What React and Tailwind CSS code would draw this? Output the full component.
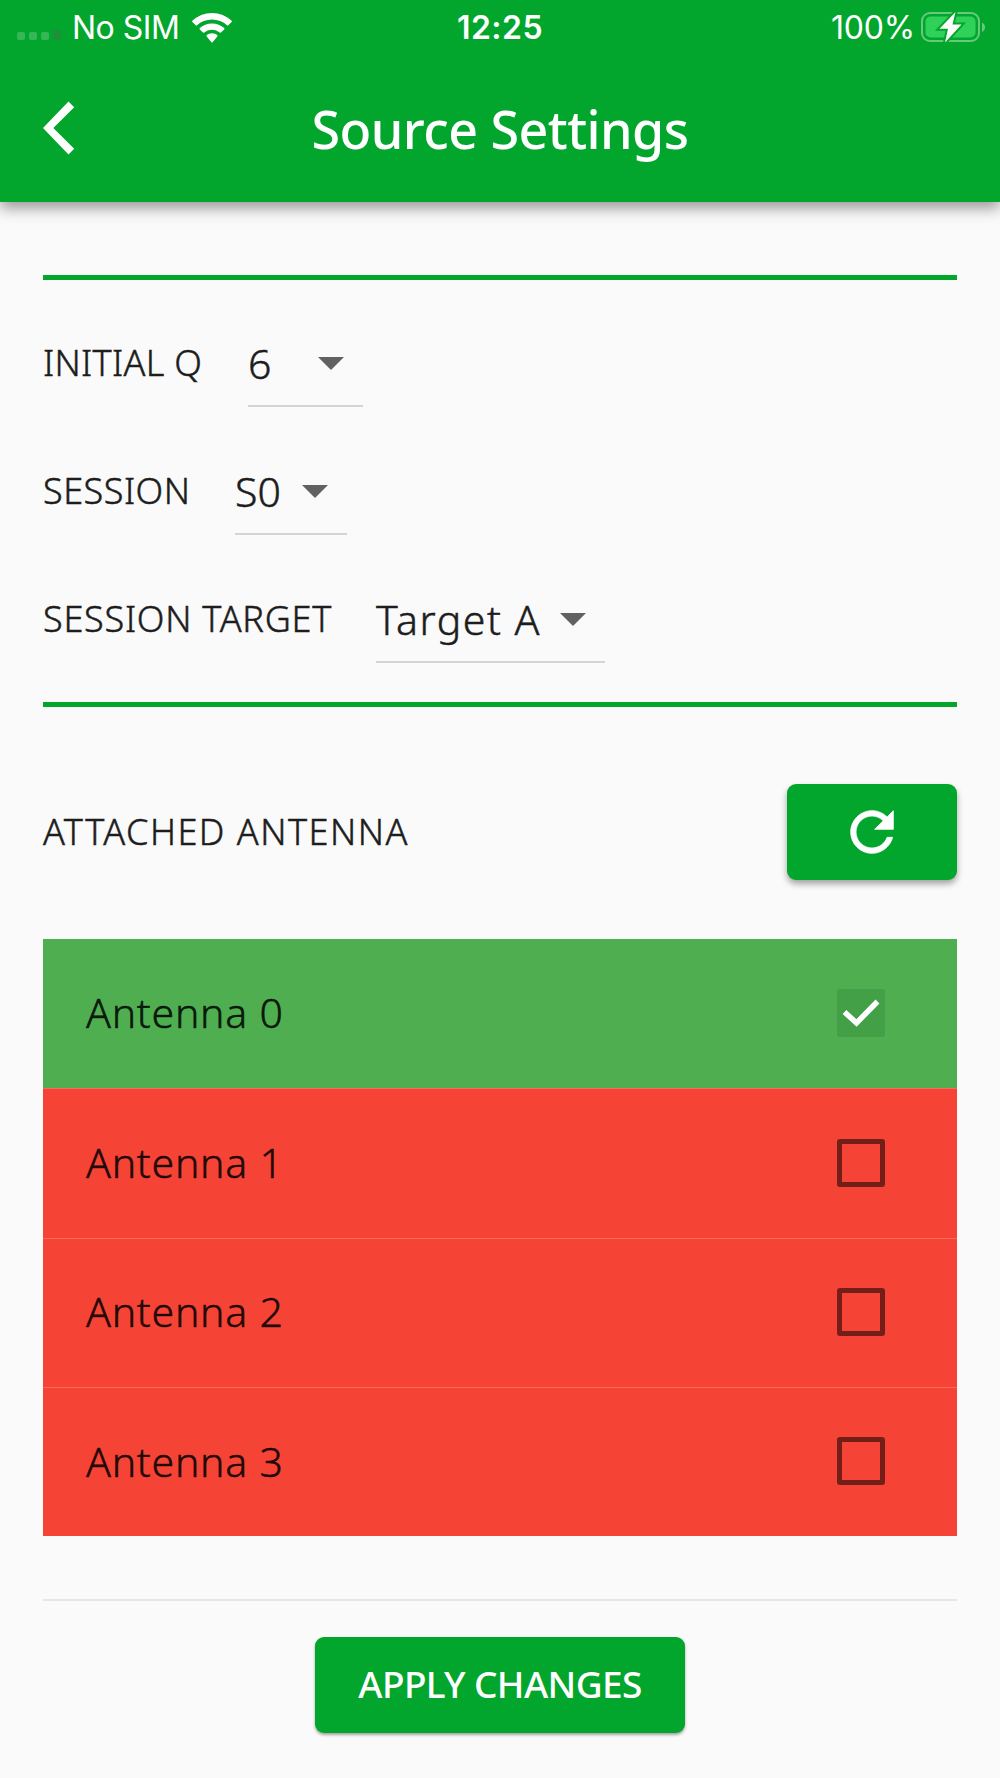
import React, { useState } from 'react'
import clsx from 'clsx'

const StatusBar = () => (
	<div className="flex h-[54px] items-center justify-between pl-[17px] pr-[15px] pt-px font-['Inter',sans-serif] text-[32px] font-normal leading-[54px] text-white">
		<div className="flex w-[330px] items-center">
			<div className="mt-[15px] flex items-end gap-1">
				<span className="h-2 w-2 rounded-[2px] bg-white/20"></span>
				<span className="h-2 w-2 rounded-[2px] bg-white/20"></span>
				<span className="h-2 w-2 rounded-[2px] bg-white/20"></span>
				<span className="h-2.5 w-2 rounded-[2px] bg-[#1f8f3b]"></span>
			</div>
			<span className="ml-[11px] w-[120px] whitespace-nowrap text-[32px] tracking-[-0.5px]">No SIM</span>
			<svg className="h-[30px] w-10" viewBox="0 0 40 30" fill="white">
				<path d="M20 0C12.5 0 5.6 2.9.4 7.700a.9.9 0 0 0 0 1.300L3.700 12.300a.9.9 0 0 0 1.300 0C8.900 8.700 14.200 6.500 20 6.500s11.100 2.200 15 5.800a.9.9 0 0 0 1.300 0l3.300-3.300a.9.9 0 0 0 0-1.300C34.400 2.900 27.500 0 20 0Z" />
				<path d="M20 10.400c-4.700 0-9 1.800-12.200 4.700a.9.9 0 0 0 0 1.300l3.300 3.200a.9.9 0 0 0 1.200 0c2.100-1.800 4.700-2.900 7.700-2.900s5.600 1.100 7.700 2.900a.9.9 0 0 0 1.200 0l3.300-3.200a.9.9 0 0 0 0-1.300C29 12.200 24.700 10.400 20 10.400Z" />
				<path d="M20 20.300c-2 0-3.900.7-5.300 1.900a.9.9 0 0 0 0 1.300l4.700 5.700a.9.9 0 0 0 1.200 0l4.700-5.700a.9.9 0 0 0 0-1.300c-1.400-1.200-3.300-1.900-5.300-1.900Z" />
			</svg>
		</div>
		<span className="mr-[2px] text-[32px] font-semibold tracking-[0.5px]">12:25</span>
		<div className="flex w-[330px] items-center justify-end">
			<span className="mr-[6px] text-[32px] tracking-[-0.2px]">100%</span>
			<svg className="-mt-[2px] h-8 w-16" viewBox="0 0 64 32">
				<rect x="1" y="2" width="57" height="28" rx="8" fill="none" stroke="white" strokeOpacity=".4" strokeWidth="2" />
				<rect x="4.500" y="5.500" width="50" height="21" rx="5" fill="#30d158" />
				<path d="M61 11.500c4 2 4 7.500 0 9.500Z" fill="white" fillOpacity=".4" />
				<path d="M34.500 1 18.500 17.700h8.500L24 31.500l16.500-18h-9Z" fill="white" stroke="#03a62c" strokeWidth="4" paintOrder="stroke" />
			</svg>
		</div>
	</div>
)

const Header = () => (
	<header className="relative h-[202px] bg-[#03a62c] shadow-[0_6px_14px_rgba(0,0,0,0.4)]">
		<StatusBar />
		<div className="flex h-[148px] items-start px-[43px] pt-[47px]">
			<button className="w-[100px]" aria-label="Back">
				<svg className="h-[54px] w-8" viewBox="0 0 32 54" fill="white">
					<path d="M25.500.5 31.200 6.200 10.300 27l20.900 20.800-5.700 5.700L0 27Z" />
				</svg>
			</button>
			<h1 className="-mt-px flex-1 whitespace-nowrap text-center text-[52px] font-medium leading-[58px] tracking-[-0.55px]">
				Source Settings
			</h1>
			<div className="w-[100px]"></div>
		</div>
	</header>
)

const RefreshIcon = () => (
	<svg className="-ml-px -mt-px h-16 w-16" viewBox="0 0 24 24" fill="white" stroke="white" strokeWidth="0.3">
		<path d="M17.650 6.350C16.200 4.900 14.210 4 12 4c-4.420 0-7.990 3.580-7.990 8s3.570 8 7.990 8c3.730 0 6.840-2.550 7.730-6h-2.080c-.82 2.330-3.040 4-5.650 4-3.310 0-6-2.690-6-6s2.690-6 6-6c1.660 0 3.140.69 4.220 1.780L13 11h7V4l-2.350 2.350z" />
	</svg>
)

const SelectRow = ({ label, labelClass, value, boxClass }) => (
	<div className="flex h-32 items-start">
		<span className={clsx('whitespace-nowrap pt-[30px] text-[36px] leading-[48px] [-webkit-text-stroke:0.5px]', labelClass)}>{label}</span>
		<button className={clsx('flex h-[98px] items-center justify-between border-b-2 border-[#d4d4d4] pr-[19px] pt-[12px] text-left', boxClass)}>
			<span className="whitespace-nowrap text-[41px] leading-[48px] [-webkit-text-stroke:0.5px]">{value}</span>
			<svg className="mt-px h-[13px] w-[26px]" viewBox="0 0 26 13" fill="#616161">
				<path d="M0 0h26L13 13Z" />
			</svg>
		</button>
	</div>
)

const Checkbox = ({ checked }) => (
	<span
		className={clsx(
			'flex h-12 w-12 items-center justify-center rounded-[3px]',
			checked ? 'bg-[#43a047]' : 'border-[5px] border-[#731e18]'
		)}
	>
		{checked && (
			<svg className="h-7 w-[38px]" viewBox="0 0 38 28" fill="none" stroke="white" strokeWidth="5.500">
				<path d="M2.500 13 14.500 24 35.500 2.500" />
			</svg>
		)}
	</span>
)

const App = () => {
	const [antennas, setAntennas] = useState([true, false, false, false])

	const toggle = (index) => setAntennas(antennas.map((on, i) => (i === index ? !on : on)))

	return (
		<div className="h-[1778px] w-[1000px] overflow-hidden bg-[#fafafa] font-['Noto_Sans',sans-serif] font-light text-[#1d1d1d]">
			<div className="text-white">
				<Header />
			</div>

			<main className="px-[43px] pt-[73px]">
				<section className="h-[432px] border-y-[5px] border-[#03a62c] pt-[29px]">
					<SelectRow label="INITIAL Q" labelClass="w-[205px] tracking-[0.3px]" value="6" boxClass="w-[115px]" />
					<SelectRow label="SESSION" labelClass="w-[192px] tracking-[0.5px]" value="S0" boxClass="w-[112px]" />
					<SelectRow label="SESSION TARGET" labelClass="w-[333px] tracking-[0.75px]" value="Target A" boxClass="w-[229px] tracking-[1.5px]" />
				</section>

				<div className="mt-[77px] flex h-24 items-center justify-between">
					<span className="text-[36px] tracking-[1.5px] [-webkit-text-stroke:0.5px]">ATTACHED ANTENNA</span>
					<button
						className="flex h-24 w-[170px] items-center justify-center rounded-[9px] bg-[#03a62c] shadow-[0_4px_6px_rgba(0,0,0,0.35)]"
						aria-label="Refresh"
					>
						<RefreshIcon />
					</button>
				</div>

				<ul className="mt-[59px] h-[597px]">
					{antennas.map((on, i) => (
						<li
							key={i}
							onClick={() => toggle(i)}
							className={clsx(
								'flex h-[149.25px] items-center justify-between pb-px pl-[43px] pr-[72px] text-[41px] tracking-[0.75px] text-black/85',
								on ? 'bg-[#4fae50]' : 'bg-[#f54336]',
								i > 0 && 'border-t border-[#f8695e]'
							)}
						>
							<span className="[-webkit-text-stroke:0.5px]">Antenna {i}</span>
							<Checkbox checked={on} />
						</li>
					))}
				</ul>

				<div className="mt-[63px] flex justify-center border-t-2 border-[#e6e6e6] pt-[36px]">
					<button className="h-24 w-[370px] whitespace-nowrap rounded-[9px] bg-[#03a62c] pb-[2px] text-[37px] font-medium tracking-[-0.6px] text-white shadow-[0_2px_3px_rgba(0,0,0,0.35)]">
						APPLY CHANGES
					</button>
				</div>
			</main>
		</div>
	)
}

export default App
